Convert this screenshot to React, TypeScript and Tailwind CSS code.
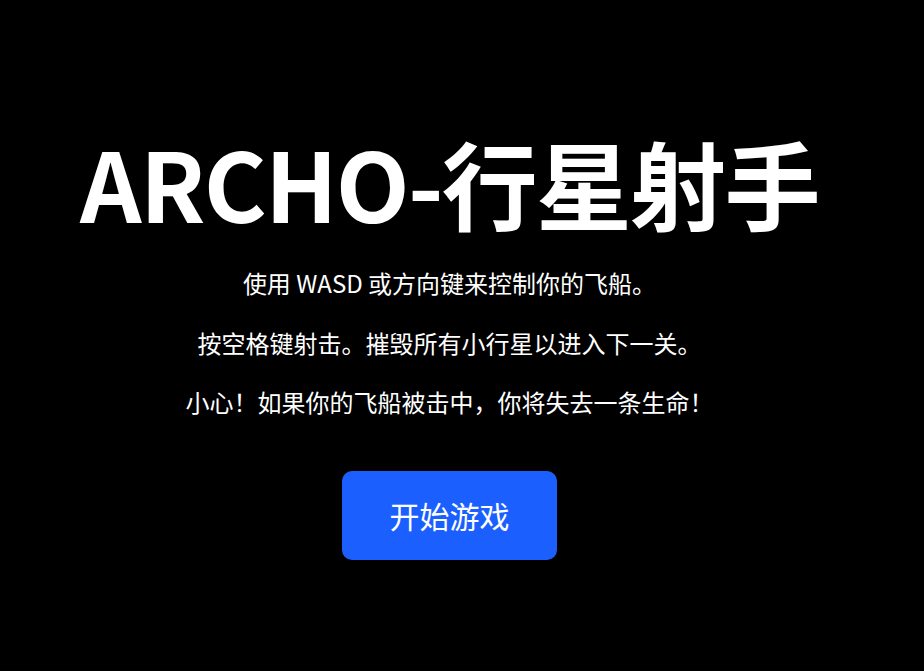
const App = () => {
  return (
    <div
      className="min-h-screen w-full bg-black text-white flex flex-col items-center pr-[25px]"
      style={{ fontFamily: '"Noto Sans CJK SC", "Noto Sans", sans-serif' }}
    >
      <h1 className="mt-[134px] text-[96px] font-bold leading-none tracking-[-0.018em]">ARCHO-行星射手</h1>
      <p className="mt-[35px] text-[24px] leading-[36px]">使用 WASD 或方向键来控制你的飞船。</p>
      <p className="mt-[24px] text-[24px] leading-[36px]">按空格键射击。摧毁所有小行星以进入下一关。</p>
      <p className="mt-[23px] text-[24px] leading-[36px]">小心！如果你的飞船被击中，你将失去一条生命！</p>
      <button className="mt-[51px] w-[215px] h-[89px] rounded-[10px] bg-[#1b60ff] text-[30px] text-white">
        开始游戏
      </button>
    </div>
  );
};

export default App;
